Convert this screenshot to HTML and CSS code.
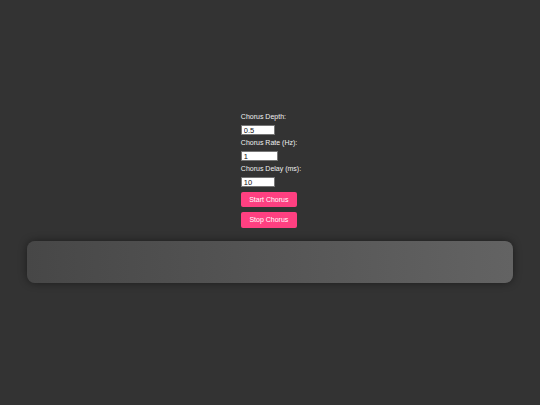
FILE: index.html
```html
<!DOCTYPE html>
<html>
<head>
<meta charset="utf-8">
<link rel="stylesheet" href="styles.css">
</head>
<body>
<div class="controls">
  <div class="field">
    <label class="label">Chorus Depth:</label>
    <input class="input w34" type="text" value="0.5">
  </div>
  <div class="field">
    <label class="label">Chorus Rate (Hz):</label>
    <input class="input w37" type="text" value="1">
  </div>
  <div class="field">
    <label class="label">Chorus Delay (ms):</label>
    <input class="input w34" type="text" value="10">
  </div>
  <button class="btn start">Start Chorus</button>
  <button class="btn stop">Stop Chorus</button>
</div>
<div class="panel"></div>
</body>
</html>
```
FILE: styles.css
```css
html, body {
  margin: 0;
  padding: 0;
  background: #333333;
  height: 100%;
}
body {
  font-family: "Liberation Sans", Arial, sans-serif;
  color: #ffffff;
  display: flex;
  flex-direction: column;
  align-items: center;
  padding-top: 111px;
  box-sizing: border-box;
}
.controls {
  display: flex;
  flex-direction: column;
  align-items: flex-start;
  padding-left: 2px;
}
.field {
  display: flex;
  flex-direction: column;
  align-items: flex-start;
  margin-bottom: 2px;
}
.label {
  font-size: 7px;
  line-height: 11px;
  height: 11px;
  margin-bottom: 3px;
  color: #f0f0f0;
}
.input {
  box-sizing: border-box;
  height: 10px;
  padding: 0 2px;
  margin: 0;
  border: 1px solid #767676;
  background: #ffffff;
  color: #111;
  font-family: "Liberation Sans", Arial, sans-serif;
  font-size: 7.5px;
  line-height: 8px;
}
.w34 { width: 34px; }
.w37 { width: 37px; }
.btn {
  box-sizing: border-box;
  width: 56px;
  height: 15px;
  padding: 0;
  margin: 0;
  border: none;
  border-radius: 2px;
  background: #ff4081;
  color: #ffffff;
  font-family: "Liberation Sans", Arial, sans-serif;
  font-size: 7px;
  line-height: 15px;
  text-align: center;
}
.start { margin-top: 3px; }
.stop { margin-top: 5px; height: 16px; line-height: 16px; }
.panel {
  align-self: stretch;
  margin: 13px 27px 0 27px;
  height: 42px;
  border-radius: 8px;
  background: linear-gradient(to right, #474747, #636363);
  box-shadow: 0 0 8px rgba(0, 0, 0, 0.45);
}
```
